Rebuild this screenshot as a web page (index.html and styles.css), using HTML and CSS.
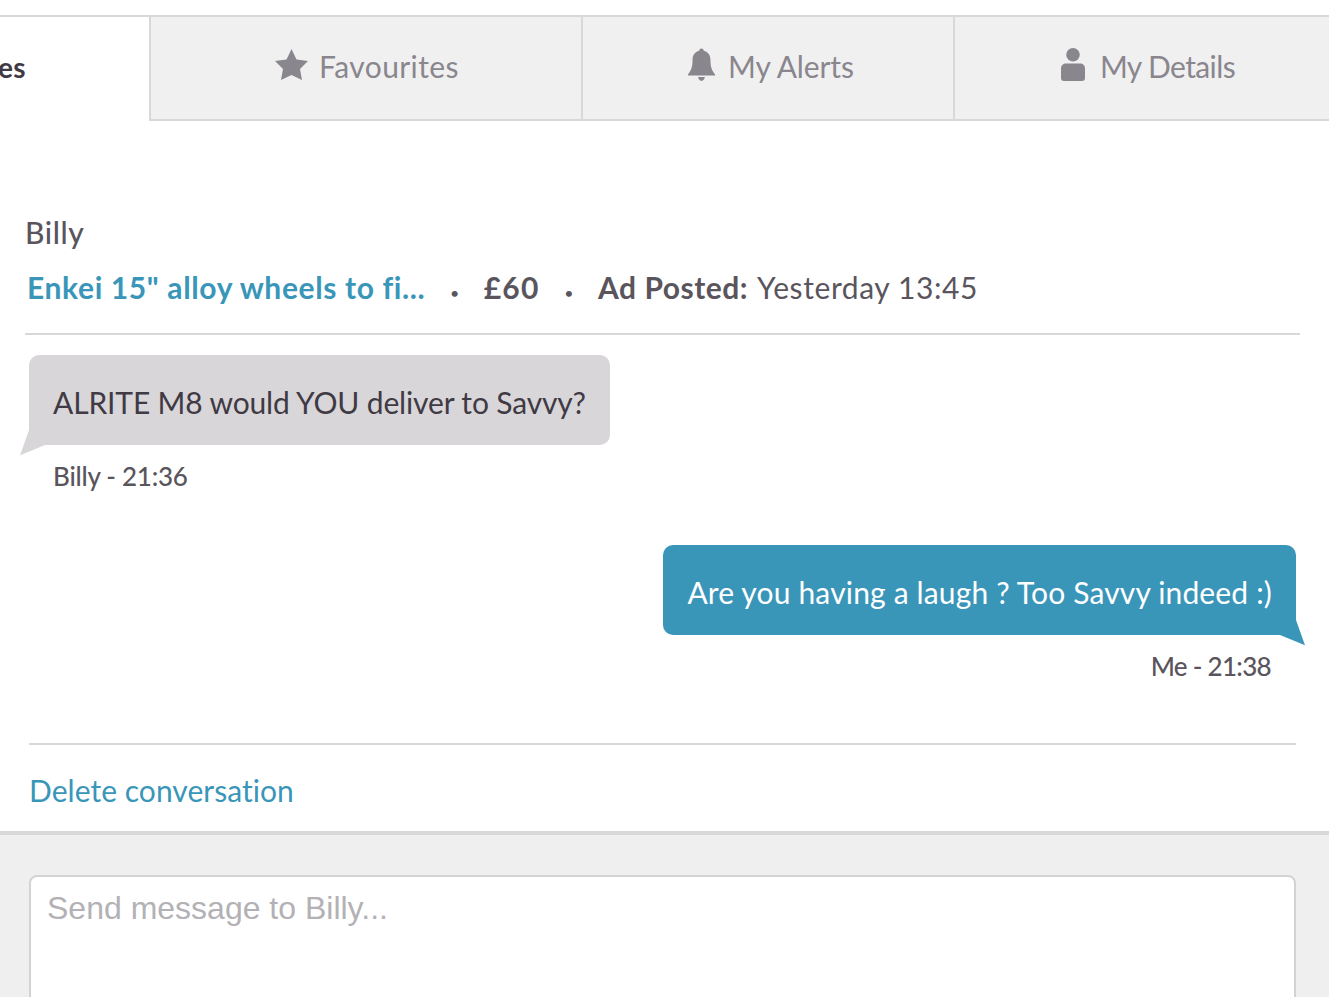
FILE: index.html
```html
<!DOCTYPE html>
<html lang="en">
<head>
<meta charset="utf-8">
<title>Messages</title>
<link rel="stylesheet" href="styles.css">
</head>
<body>
<nav class="tabs">
  <a class="tab tab-active"><span class="tab-clip">Messages</span></a>
  <a class="tab tab-fav">
    <svg class="icon icon-star" viewBox="0 0 33 31"><path d="M16.500 0L21.500 10.500 33 12 25 20 27 31 16.500 26 6 31 8 20 0 12 11.500 10.500z"/></svg>
    Favourites</a>
  <a class="tab tab-alerts">
    <svg class="icon icon-bell" viewBox="0 0 28 34"><path d="M14 0c1.300 0 2.200.9 2.300 2.300C21 3.400 23.300 7 23.300 12c0 7 1.500 11 4.700 14.500V28H0v-1.500C3.200 23 4.700 19 4.700 12c0-5 2.300-8.600 7-9.700C11.800.9 12.700 0 14 0zM10.500 29.500h7C17.200 32 15.800 33.500 14 33.500s-3.200-1.500-3.500-4z"/></svg>
    My Alerts</a>
  <a class="tab tab-details">
    <svg class="icon icon-user" viewBox="0 0 24 33"><circle cx="12" cy="6.800" r="6.800"/><path d="M5 15.500h14c3 0 5 2 5 5V30c0 2-1 3-3 3H3c-2 0-3-1-3-3v-9.500c0-3 2-5 5-5z"/></svg>
    My Details</a>
</nav>

<main class="conversation">
  <header class="head">
    <h1 class="name">Billy</h1>
    <p class="meta">
      <a class="ad-link">Enkei 15" alloy wheels to fi...</a>
      <span class="dot">•</span>
      <strong class="price">£60</strong>
      <span class="dot">•</span>
      <span class="posted"><strong>Ad Posted:</strong> Yesterday 13:45</span>
    </p>
  </header>

  <section class="thread">
    <div class="msg msg-in">
      <div class="bubble">ALRITE M8 would YOU deliver to Savvy?</div>
      <div class="stamp">Billy - 21:36</div>
    </div>
    <div class="msg msg-out">
      <div class="bubble">Are you having a laugh ? Too Savvy indeed :)</div>
      <div class="stamp">Me - 21:38</div>
    </div>
  </section>

  <div class="actions"><a class="delete">Delete conversation</a></div>
</main>

<footer class="composer">
  <textarea class="input" placeholder="Send message to Billy..."></textarea>
</footer>
</body>
</html>
```

FILE: styles.css
```css
html, body {
  margin: 0;
  height: 997px;
  overflow: hidden;
  background: #fff;
}
body {
  font-family: Lato, "Open Sans", sans-serif;
  color: #5a555d;
  font-size: 30px;
}
.tabs {
  display: flex;
  height: 106px;
  margin-top: 15px;
  border-top: 2px solid #d9d7da;
  box-sizing: border-box;
}
.tab {
  display: flex;
  align-items: center;
  justify-content: center;
  box-sizing: border-box;
  background: #f0f0f1;
  color: #8a868d;
  font-size: 30px;
  letter-spacing: 0.4px;
  border-bottom: 2px solid #d9d7da;
  border-left: 2px solid #d9d7da;
  padding-bottom: 4px;
}
.tab-active {
  width: 149px;
  background: #fff;
  border-left: 0;
  border-bottom: 0;
  justify-content: flex-end;
  overflow: hidden;
  color: #3f3a44;
  font-weight: 700;
  font-size: 28px;
  padding-right: 123px;
}
.tab-clip { flex: none; }
.tab-fav { width: 432px; padding-left: 2px; }
.tab-alerts { width: 372px; letter-spacing: -0.1px; padding-left: 6px; }
.tab-details { flex: 1; letter-spacing: -0.6px; padding-left: 12px; }
.icon {
  fill: #8a868d;
  flex: none;
  margin-right: 13px;
}
.icon-star { width: 33px; height: 31px; margin-right: 11px; margin-top: -4px; }
.icon-bell { width: 27px; height: 34px; margin-top: -2px; }
.icon-user { width: 24px; height: 33px; margin-right: 15px; margin-top: -3px; }

.head { padding: 93px 29px 0 25px; }
.name {
  margin: 0;
  font-size: 30px;
  line-height: 36px;
  font-weight: 500;
  letter-spacing: 0.6px;
  color: #5a555d;
}
.meta {
  margin: 19px 0 0;
  padding: 0 0 22px 2px;
  display: flex;
  align-items: baseline;
  line-height: 36px;
  font-size: 30px;
  border-bottom: 2px solid #d9d7da;
  white-space: pre;
}
.ad-link { color: #3a96b9; font-weight: 700; letter-spacing: 0.63px; }
.dot { margin: 0 24.5px; font-size: 16px; }
.price { font-weight: 700; letter-spacing: 1.3px; }
.posted { font-weight: 400; letter-spacing: 0.6px; }
.posted strong { font-weight: 700; letter-spacing: 0.5px; margin-right: 2px; }

.thread { padding: 20px 33px 0 29px; }
.msg { display: flex; flex-direction: column; }
.msg-in { align-items: flex-start; }
.msg-out { align-items: flex-end; margin-top: 53px; }
.bubble {
  position: relative;
  height: 90px;
  box-sizing: border-box;
  padding: 4px 24px 0;
  display: flex;
  align-items: center;
  border-radius: 10px;
  font-size: 30px;
  white-space: nowrap;
}
.msg-in .bubble { background: #d8d6d9; color: #3f3a44; letter-spacing: -0.15px; }
.msg-out .bubble { background: #3a96b9; color: #fff; letter-spacing: 0.16px; }
.bubble::after {
  content: "";
  position: absolute;
  bottom: -11px;
  width: 25px;
  height: 26px;
}
.msg-in .bubble::after {
  left: -9px;
  background: #d8d6d9;
  clip-path: polygon(36% 0, 100% 0, 100% 58%, 0 97%);
}
.msg-out .bubble::after {
  right: -9px;
  background: #3a96b9;
  clip-path: polygon(0 0, 64% 0, 100% 97%, 0 58%);
}
.stamp {
  margin-top: 15px;
  font-size: 26px;
  line-height: 32px;
  font-weight: 500;
  color: #5a555d;
}
.msg-in .stamp { padding-left: 24px; letter-spacing: -0.25px; }
.msg-out .stamp { padding-right: 25px; letter-spacing: -0.7px; }
.actions {
  margin: 61px 33px 0 29px;
  border-top: 2px solid #d9d7da;
  padding-top: 25px;
  height: 88px;
  box-sizing: border-box;
}
.delete { color: #3a96b9; font-size: 30px; line-height: 40px; letter-spacing: 0.04px; }
.composer {
  background: #efefef;
  border-top: 4px solid #d9d7da;
  padding: 40px 33px 0 29px;
  height: 170px;
  box-sizing: border-box;
}
.input {
  display: block;
  width: 100%;
  height: 160px;
  box-sizing: border-box;
  border: 2px solid #d4d2d5;
  border-radius: 8px;
  background: #fff;
  padding: 13px 16px;
  font-family: "Liberation Sans", Arial, sans-serif;
  font-size: 32px;
  line-height: 37px;
  resize: none;
  outline: none;
}
.input::placeholder { color: #b3b1b5; opacity: 1; }
```
